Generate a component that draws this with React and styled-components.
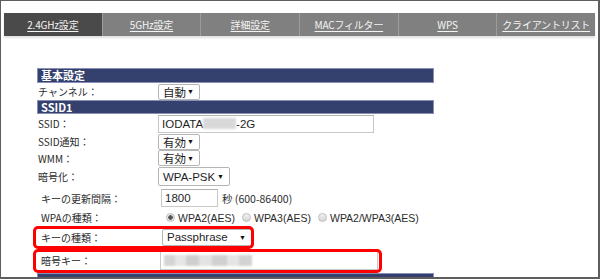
import React from 'react';
import styled, { createGlobalStyle } from 'styled-components';

const GlobalStyle = createGlobalStyle`
  html, body {
    margin: 0;
    padding: 0;
    background: #fff;
  }
`;

const Frame = styled.div`
  width: 600px;
  height: 279px;
  box-sizing: border-box;
  border: 1px solid #5e5e5e;
  border-right-width: 2px;
  border-bottom-width: 2px;
  background: #fff;
  overflow: hidden;
  padding-top: 12px;
  font-family: "Noto Sans CJK JP", sans-serif;
`;

const TabBar = styled.div`
  display: flex;
  height: 23px;
  margin: 0 3px;
  background: #808080;
  box-shadow: 0 2px 2px rgba(0, 0, 0, 0.12);
`;

const Tab = styled.a`
  flex: 1;
  display: flex;
  align-items: center;
  justify-content: center;
  position: relative;
  background: ${(p) => (p.$active ? '#4a4a4a' : 'transparent')};
  color: #f4f4f4;
  font-size: 10px;
  text-decoration: underline;
  text-underline-offset: 2px;
  letter-spacing: -0.2px;

  & + & {
    border-left: 1px solid #9c9c9c;
    background-clip: padding-box;
  }
`;

const Form = styled.div`
  width: 397px;
  margin: 32px 0 0 36px;
`;

const Header = styled.div`
  height: ${(p) => p.$h}px;
  box-sizing: border-box;
  border: 1px solid #8790b4;
  background: #34406e;
  color: #fff;
  font-size: 11px;
  font-weight: bold;
  line-height: ${(p) => p.$h - 2}px;
  padding-left: 3px;
`;

const Row = styled.div`
  position: relative;
  display: grid;
  grid-template-columns: 121px 1fr;
  align-items: center;
  height: ${(p) => p.$h}px;

  &::after {
    content: '';
    display: ${(p) => (p.$mark ? 'block' : 'none')};
    position: absolute;
    top: ${(p) => p.$markTop || 0}px;
    bottom: ${(p) => p.$markBottom || 0}px;
    left: -4px;
    width: ${(p) => p.$markWidth}px;
    box-sizing: border-box;
    border: 3px solid #f00;
    border-radius: 5px;
    pointer-events: none;
  }
`;

const Label = styled.span`
  font-size: 10px;
  color: #2b2b2b;
  padding-left: ${(p) => (p.$indent ? 4 : 1)}px;
  white-space: nowrap;
`;

const Value = styled.div`
  display: flex;
  align-items: center;
  gap: 4px;
  padding-left: ${(p) => p.$shift || 0}px;
`;

const Select = styled.div`
  display: inline-flex;
  align-items: center;
  justify-content: space-between;
  box-sizing: border-box;
  width: ${(p) => p.$w}px;
  height: ${(p) => p.$h || 16}px;
  padding: 0 5px 0 4px;
  border: 1px solid #b5b5b5;
  border-radius: 2px;
  background: #fff;
  color: #1e1e1e;
  font-family: "Liberation Sans", "Noto Sans CJK JP", sans-serif;
  font-size: 11.5px;

  &::after {
    content: '▼';
    font-size: 7px;
    color: #111;
  }
`;

const Input = styled.div`
  display: flex;
  align-items: center;
  box-sizing: border-box;
  width: ${(p) => p.$w}px;
  height: ${(p) => p.$h || 18}px;
  padding-left: 3px;
  border: 1px solid #c8c8c8;
  border-top-color: #b0b0b0;
  background: #fff;
  color: #1e1e1e;
  font-family: "Liberation Sans", "Noto Sans CJK JP", sans-serif;
  font-size: 11.5px;
`;

const Blur = styled.span`
  display: inline-block;
  width: ${(p) => p.$w}px;
  height: 11px;
  background: ${(p) => p.$bg || '#d9d9d9'};
  filter: blur(1.2px);
`;

const Note = styled.span`
  font-size: 10.5px;
  color: #2b2b2b;
  font-family: "Noto Sans CJK JP", sans-serif;
`;

const RadioGroup = styled.div`
  display: flex;
  align-items: center;
  padding-left: 8px;
  gap: 5px;
`;

const Radio = styled.span`
  display: inline-flex;
  align-items: center;
  gap: 3px;
  margin-right: 2px;
  font-family: "Liberation Sans", sans-serif;
  font-size: 10.5px;
  color: #2b2b2b;

  &::before {
    content: '';
    width: 9px;
    height: 9px;
    border-radius: 50%;
    box-sizing: border-box;
    border: 1px solid #bdbdbd;
    background: ${(p) =>
      p.$checked
        ? 'radial-gradient(circle, #555 0 2px, #e8e8e8 2.5px)'
        : 'linear-gradient(#f2f2f2, #d6d6d6)'};
  }
`;

const tabs = ['2.4GHz設定', '5GHz設定', '詳細設定', 'MACフィルター', 'WPS', 'クライアントリスト'];

export default function App() {
  return (
    <>
      <GlobalStyle />
      <Frame>
        <TabBar>
          {tabs.map((t, i) => (
            <Tab key={t} $active={i === 0}>{t}</Tab>
          ))}
        </TabBar>
        <Form>
          <Header $h={15}>基本設定</Header>
          <Row $h={17}>
            <Label>チャンネル：</Label>
            <Value><Select $w={42}>自動</Select></Value>
          </Row>
          <Header $h={14}>SSID1</Header>
          <Row $h={19}>
            <Label>SSID：</Label>
            <Value>
              <Input $w={216}>
                IODATA<Blur $w={33} />-2G
              </Input>
            </Value>
          </Row>
          <Row $h={17}>
            <Label>SSID通知：</Label>
            <Value><Select $w={42}>有効</Select></Value>
          </Row>
          <Row $h={16}>
            <Label>WMM：</Label>
            <Value><Select $w={42}>有効</Select></Value>
          </Row>
          <Row $h={21}>
            <Label>暗号化：</Label>
            <Value><Select $w={72} $h={19}>WPA-PSK</Select></Value>
          </Row>
          <Row $h={22}>
            <Label $indent>キーの更新間隔：</Label>
            <Value $shift={3}>
              <Input $w={57}>1800</Input>
              <Note>秒 (600-86400)</Note>
            </Value>
          </Row>
          <Row $h={17}>
            <Label $indent>WPAの種類：</Label>
            <RadioGroup>
              <Radio $checked>WPA2(AES)</Radio>
              <Radio>WPA3(AES)</Radio>
              <Radio>WPA2/WPA3(AES)</Radio>
            </RadioGroup>
          </Row>
          <Row $h={22} $mark $markWidth={221} $markBottom={-1}>
            <Label $indent>キーの種類：</Label>
            <Value $shift={4}><Select $w={90} $h={17}>Passphrase</Select></Value>
          </Row>
          <Row $h={25} $mark $markWidth={349} $markTop={1}>
            <Label $indent>暗号キー：</Label>
            <Value $shift={2}>
              <Input $w={218} $h={19}>
                <Blur $w={88} $bg="linear-gradient(90deg, #d4d4d4 0 12%, #e6e6e6 12% 25%, #cfcfcf 25% 40%, #e3e3e3 40% 55%, #d0d0d0 55% 72%, #e5e5e5 72% 85%, #d2d2d2 85%)" />
              </Input>
            </Value>
          </Row>
          <Header $h={16}>Copy SSID</Header>
        </Form>
      </Frame>
    </>
  );
}
